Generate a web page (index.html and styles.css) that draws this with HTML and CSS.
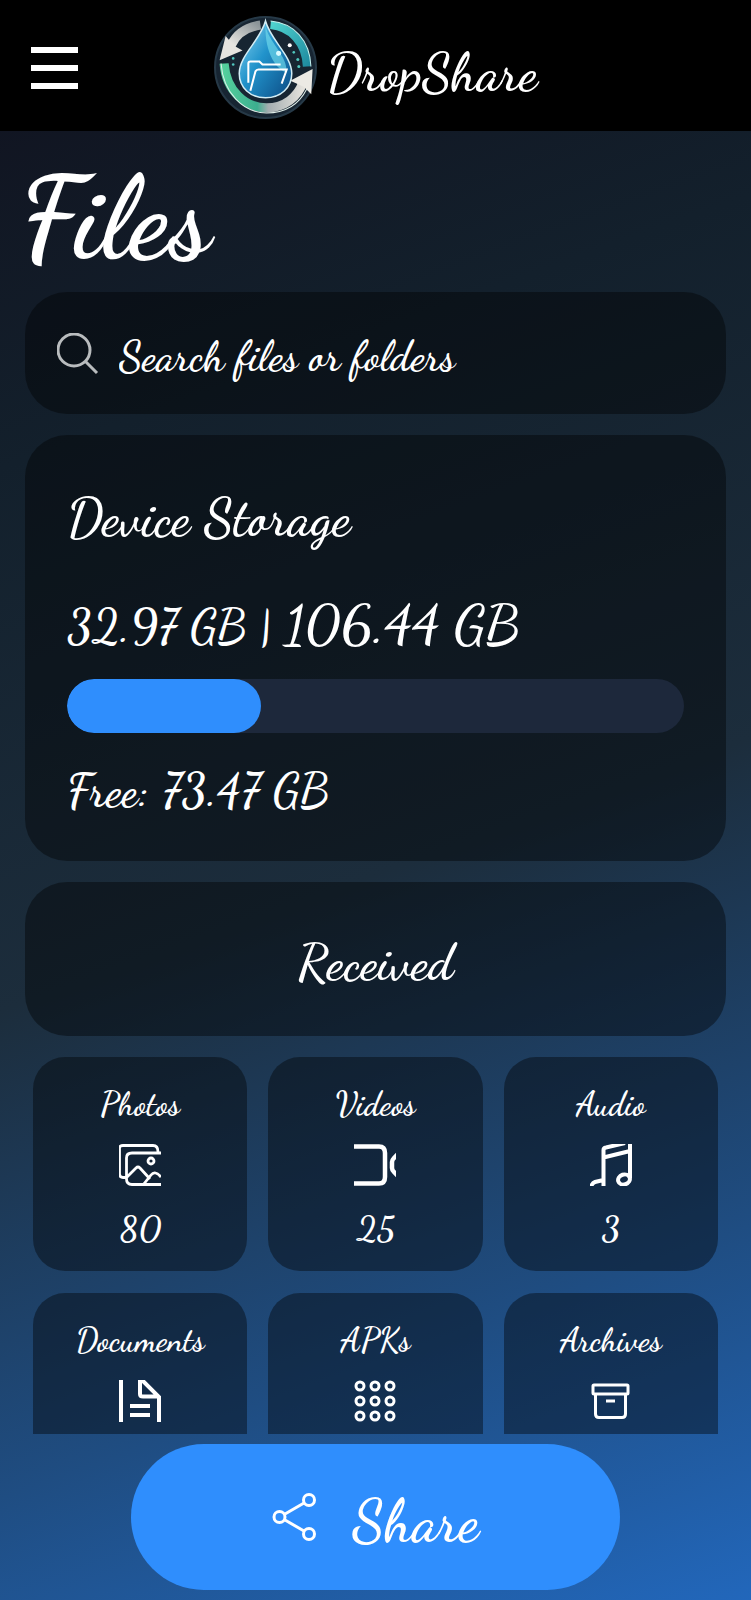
FILE: index.html
```html
<!DOCTYPE html>
<html lang="en">
<head>
<meta charset="utf-8">
<meta name="viewport" content="width=device-width, initial-scale=1">
<title>DropShare</title>
<link rel="stylesheet" href="styles.css">
</head>
<body>
<header class="topbar">
  <button class="menu" type="button" aria-label="Menu"><span></span><span></span><span></span></button>
  <div class="brand">
    <svg class="logo" viewBox="0 0 102 102" aria-hidden="true">
      <defs>
        <linearGradient id="drop" x1="0" y1="0" x2="1" y2="1"><stop offset="0" stop-color="#8ed8f2"/><stop offset=".45" stop-color="#2193cb"/><stop offset="1" stop-color="#0c4a83"/></linearGradient>
        <linearGradient id="ring" x1="0" y1="0" x2="1" y2="0"><stop offset="0" stop-color="#54cf9c"/><stop offset=".42" stop-color="#3cae8f"/><stop offset=".56" stop-color="#a4adb0"/><stop offset="1" stop-color="#e4e2dc"/></linearGradient>
        <linearGradient id="silver" x1="0" y1="1" x2="1" y2="0"><stop offset="0" stop-color="#ece9e4"/><stop offset="1" stop-color="#8b9498"/></linearGradient>
        <linearGradient id="teal" x1="0" y1="0" x2="1" y2="1"><stop offset="0" stop-color="#4fd3cf"/><stop offset="1" stop-color="#1f8ba0"/></linearGradient>
      </defs>
      <circle cx="51" cy="51" r="50" fill="#172532" stroke="#263947" stroke-width="2"/>
      <path d="M46 9C32 11 22 18 17 29" fill="none" stroke="url(#silver)" stroke-width="9"/>
      <path d="M12 22L7 42L26 34L19 30Z" fill="#e7e4df" stroke="#e7e4df" stroke-width="2"/>
      <path d="M56 9C76 11 91 26 92 50" fill="none" stroke="url(#teal)" stroke-width="8"/>
      <path d="M56 5C79 7 95 24 96 50" fill="none" stroke="#c5f1ee" stroke-width="1"/>
      <path d="M10 47C12 74 31 91 52 91C70 91 83 80 88 66" fill="none" stroke="url(#ring)" stroke-width="9"/>
      <path d="M7 47C9 76 29 96 52 96C72 96 85 86 92 72" fill="none" stroke="#e0eee9" stroke-width="1"/>
      <path d="M79 64L96 55L95 74L90 69Z" fill="#eceae4" stroke="#eceae4" stroke-width="3"/>
      <path d="M51 5C46 24 25 39 25 57C25 71 36 81 51 81C66 81 77 71 77 57C77 39 56 24 51 5Z" fill="url(#drop)" stroke="#d3edf5" stroke-width="1.5"/>
      <path d="M51 9C53 25 73 39 72 56C63 54 50 38 51 9Z" fill="#71dcec" opacity=".65"/>
      <path d="M34 66V47Q34 45 36 45H45L48 48H66" fill="none" stroke="#fff" stroke-width="2"/>
      <path d="M36 74L41 55Q42 53 44 53H72L67 67" fill="none" stroke="#fff" stroke-width="2"/>
      <circle cx="64" cy="37" r="2.5" fill="#d9faff"/>
      <g fill="#50c6bd"><circle cx="75" cy="29" r="2" fill="#fff"/><circle cx="79" cy="36" r="1.3"/><circle cx="83" cy="43" r="1.5"/><circle cx="84" cy="50" r="1.5"/><circle cx="19" cy="42" r="1.3"/><circle cx="19" cy="48" r="1.3"/></g>
    </svg>
    <span class="brand-name">DropShare</span>
  </div>
</header>
<main class="content">
  <h1 class="title">Files</h1>
  <div class="stack">
  <label class="card search">
    <svg class="search-icon" viewBox="0 0 42 42" aria-hidden="true"><circle cx="17" cy="17" r="16"/><path d="M28 28L40 40"/></svg>
    <input class="search-input" type="search" placeholder="Search files or folders" aria-label="Search files or folders">
  </label>
  <section class="card storage">
    <h2 class="storage-title">Device Storage</h2>
    <p class="usage"><span>32.97 GB |</span><span class="total">106.44 GB</span></p>
    <div class="bar"><div class="bar-fill" style="width:31.4%"></div></div>
    <p class="free">Free: 73.47 GB</p>
  </section>
  <button class="card received" type="button">Received</button>
  <div class="tiles">
    <button class="tile" type="button"><span class="tile-name">Photos</span>
      <svg class="icon" viewBox="0 0 42 42" aria-hidden="true"><g stroke-width="2.8"><path d="M7 33.500H4Q.5 33.500.5 30V4Q.5 1.500 4 1.500H34Q39 1.500 39 8"/><path d="M42 9H13Q7.500 9 7.500 14V35Q7.500 40.500 13 40.500H42M8 33L17 24Q19 22 21 24L31 35M24 41L32 31Q36 26 42 33"/><circle cx="32" cy="17" r="3"/></g></svg>
      <span class="tile-count">80</span></button>
    <button class="tile" type="button"><span class="tile-name">Videos</span>
      <svg class="icon" viewBox="0 0 42 42" aria-hidden="true"><g stroke-width="4.500"><path d="M0 2.500H25Q31 2.500 31 9V33Q31 39.500 25 39.500H0"/><path d="M44 10L40 14Q38 16 38 18V24Q38 26 40 28L44 32"/></g></svg>
      <span class="tile-count">25</span></button>
    <button class="tile" type="button"><span class="tile-name">Audio</span>
      <svg class="icon" viewBox="0 0 42 42" aria-hidden="true"><g stroke-width="4"><path d="M13.500 43V6Q13.500 4 16 3.500L35-1M13.500 13.500L40 7M40-1V34M13.500 36L5 38Q2 39 1 43"/><ellipse cx="34" cy="35.500" rx="6" ry="5" transform="rotate(-18 34 35.500)"/></g></svg>
      <span class="tile-count">3</span></button>
    <button class="tile" type="button"><span class="tile-name">Documents</span>
      <svg class="icon" viewBox="0 0 42 42" aria-hidden="true"><g stroke-width="4"><path d="M2-1V43M40 43V17L22-1M21-1V14Q21 16.500 24 16.500H40M11 26H31M11 35H31"/></g></svg></button>
    <button class="tile" type="button"><span class="tile-name">APKs</span>
      <svg class="icon" viewBox="0 0 42 42" aria-hidden="true"><g stroke-width="3"><circle cx="6" cy="6" r="4"/><circle cx="21" cy="6" r="4"/><circle cx="36" cy="6" r="4"/><circle cx="6" cy="21" r="4"/><circle cx="21" cy="21" r="4"/><circle cx="36" cy="21" r="4"/><circle cx="6" cy="36" r="4"/><circle cx="21" cy="36" r="4"/><circle cx="36" cy="36" r="4"/></g></svg></button>
    <button class="tile" type="button"><span class="tile-name">Archives</span>
      <svg class="icon" viewBox="0 0 42 42" aria-hidden="true"><g stroke-width="3"><rect x="3" y="5" width="35" height="9" rx="1"/><path d="M5.500 14V34Q5.500 37.500 9 37.500H32Q35.500 37.500 35.500 34V14M16 21H25"/></g></svg></button>
  </div>
  </div>
</main>
<footer class="footer">
  <button class="share" type="button">
    <svg class="share-icon" viewBox="0 0 46 52" aria-hidden="true"><circle cx="37" cy="9" r="5.500"/><circle cx="7.500" cy="26" r="5.500"/><circle cx="37" cy="43" r="5.500"/><path d="M13 23L32 12M13 29L32 40"/></svg>
    <span class="share-label">Share</span>
  </button>
</footer>
</body>
</html>
```

FILE: styles.css
```css
* { box-sizing: border-box; }

body {
  margin: 0;
  height: 100vh;
  display: flex;
  flex-direction: column;
  color: #fff;
  background: linear-gradient(160deg, #10111e 0%, #13202c 25%, #1c2d3c 54%, #1f4d82 80%, #2267bb 100%);
  font-family: "Dancing Script", "Liberation Serif", cursive;
  font-weight: 600;
}

button, input { font: inherit; color: inherit; border: 0; }
button { padding: 0; cursor: pointer; }
h1, h2, p { margin: 0; }

.topbar {
  flex: none;
  display: grid;
  grid-template-columns: 1fr auto 1fr;
  align-items: center;
  padding: 16px 31px 12px;
  background: #000;
}
.menu {
  width: 47px;
  display: flex;
  flex-direction: column;
  gap: 12px;
  background: none;
}
.menu span { height: 6px; background: #fff; }
.brand { display: flex; align-items: center; gap: 10px; }
.logo { width: 103px; height: 103px; }
.brand-name { padding-top: 10px; font-size: 53px; line-height: 60px; }

.content {
  flex: 1;
  min-height: 0;
  overflow: hidden;
  padding: 28px 20px 0;
}
.title { font-size: 115px; line-height: 121px; font-weight: 700; margin-bottom: 12px; }
.stack { padding: 0 5px; }

.card {
  display: block;
  width: 100%;
  margin-bottom: 21px;
  border-radius: 42px;
  background: rgba(0, 0, 0, 0.4);
}

.search { display: flex; align-items: center; gap: 20px; padding: 33px 32px 31px; }
.search-icon { flex: none; width: 42px; height: 42px; fill: none; stroke: #b9bcbe; stroke-width: 3; }
.search-input {
  flex: 1;
  min-width: 0;
  height: 58px;
  padding: 4px 0 0;
  background: none;
  outline: 0;
  font-size: 42px;
}
.search-input::placeholder { color: #fff; opacity: 1; }

.storage { padding: 42px; }
.storage-title { font-size: 53px; line-height: 82px; font-weight: 600; }
.usage {
  display: flex;
  align-items: baseline;
  gap: 12px;
  margin: 27px 0 14px;
  font-size: 47px;
  line-height: 76px;
}
.total { font-size: 55px; }
.bar { height: 54px; border-radius: 27px; background: #1d283b; overflow: hidden; }
.bar-fill { height: 100%; border-radius: 27px; background: #2f8efd; }
.free { margin-top: 30px; font-size: 47px; line-height: 56px; }

.received { padding: 49px 0 41px; font-size: 51px; line-height: 64px; }

.tiles {
  display: grid;
  grid-template-columns: repeat(3, 1fr);
  gap: 22px 21px;
  padding: 0 8px;
}
.tile {
  aspect-ratio: 1;
  display: flex;
  flex-direction: column;
  align-items: center;
  gap: 18px;
  padding-top: 27px;
  border-radius: 32px;
  background: rgba(0, 0, 0, 0.4);
}
.tile-name { font-size: 33px; line-height: 42px; }
.tile-count { font-size: 35px; line-height: 50px; }
.icon { flex: none; width: 42px; height: 42px; fill: none; stroke: #fff; }

.footer { flex: none; display: flex; justify-content: center; padding: 10px; }
.share {
  width: 65%;
  min-width: 489px;
  height: 146px;
  display: flex;
  align-items: center;
  justify-content: center;
  gap: 34px;
  border-radius: 73px;
  background: #2f8efd;
}
.share-icon { width: 46px; height: 52px; fill: none; stroke: #fff; stroke-width: 3; }
.share-label { padding-top: 10px; font-size: 58px; line-height: 64px; }
```
